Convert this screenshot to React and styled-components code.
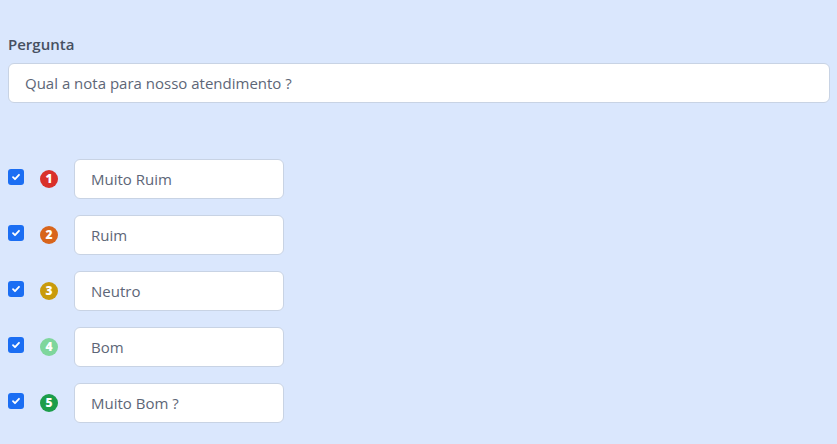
import React from 'react'
import styled, { createGlobalStyle } from 'styled-components'

const GlobalStyle = createGlobalStyle`
  html, body {
    margin: 0;
    padding: 0;
    background: #dae7fd;
  }
  body {
    font-family: "Open Sans", "Liberation Sans", sans-serif;
  }
`

const Page = styled.div`
  min-height: 444px;
  padding: 34px 7px 0 8px;
  box-sizing: border-box;
  background: #dae7fd;
`

const Label = styled.div`
  font-size: 15px;
  font-weight: 600;
  color: #465061;
  line-height: 20px;
  margin-bottom: 9px;
`

const TextBox = styled.div`
  box-sizing: border-box;
  height: 40px;
  width: ${p => (p.small ? '210px' : '100%')};
  background: #fff;
  border: 1px solid #c8d3e4;
  border-radius: 6px;
  padding: 0 16px;
  display: flex;
  align-items: center;
  font-size: 15px;
  color: #5d6677;
`

const Options = styled.div`
  margin-top: 56px;
  display: flex;
  flex-direction: column;
  gap: 16px;
`

const Row = styled.div`
  display: flex;
  align-items: center;
`

const Check = styled.span`
  width: 16px;
  height: 16px;
  border-radius: 3px;
  background: #1b6ef3;
  display: flex;
  align-items: center;
  justify-content: center;
  margin-right: 16px;
  margin-top: -4px;
`

const Badge = styled.span`
  width: 18px;
  height: 18px;
  border-radius: 50%;
  background: ${p => p.color};
  color: #fff;
  font-size: 12px;
  font-weight: 800;
  display: flex;
  align-items: center;
  justify-content: center;
  margin-right: 16px;
  line-height: 1;
`

const options = [
  { n: 1, color: '#d9302a', text: 'Muito Ruim' },
  { n: 2, color: '#d8651c', text: 'Ruim' },
  { n: 3, color: '#c99b0c', text: 'Neutro' },
  { n: 4, color: '#7ed69c', text: 'Bom' },
  { n: 5, color: '#1c9d4a', text: 'Muito Bom ?' },
]

export default function App() {
  return (
    <Page>
      <GlobalStyle />
      <Label>Pergunta</Label>
      <TextBox>Qual a nota para nosso atendimento ?</TextBox>
      <Options>
        {options.map(o => (
          <Row key={o.n}>
            <Check>
              <svg width="10" height="10" viewBox="0 0 10 10">
                <path d="M2 5.2l2 2 4-4.4" fill="none" stroke="#fff" strokeWidth="1.8" strokeLinecap="round" strokeLinejoin="round" />
              </svg>
            </Check>
            <Badge color={o.color}>{o.n}</Badge>
            <TextBox small>{o.text}</TextBox>
          </Row>
        ))}
      </Options>
    </Page>
  )
}
